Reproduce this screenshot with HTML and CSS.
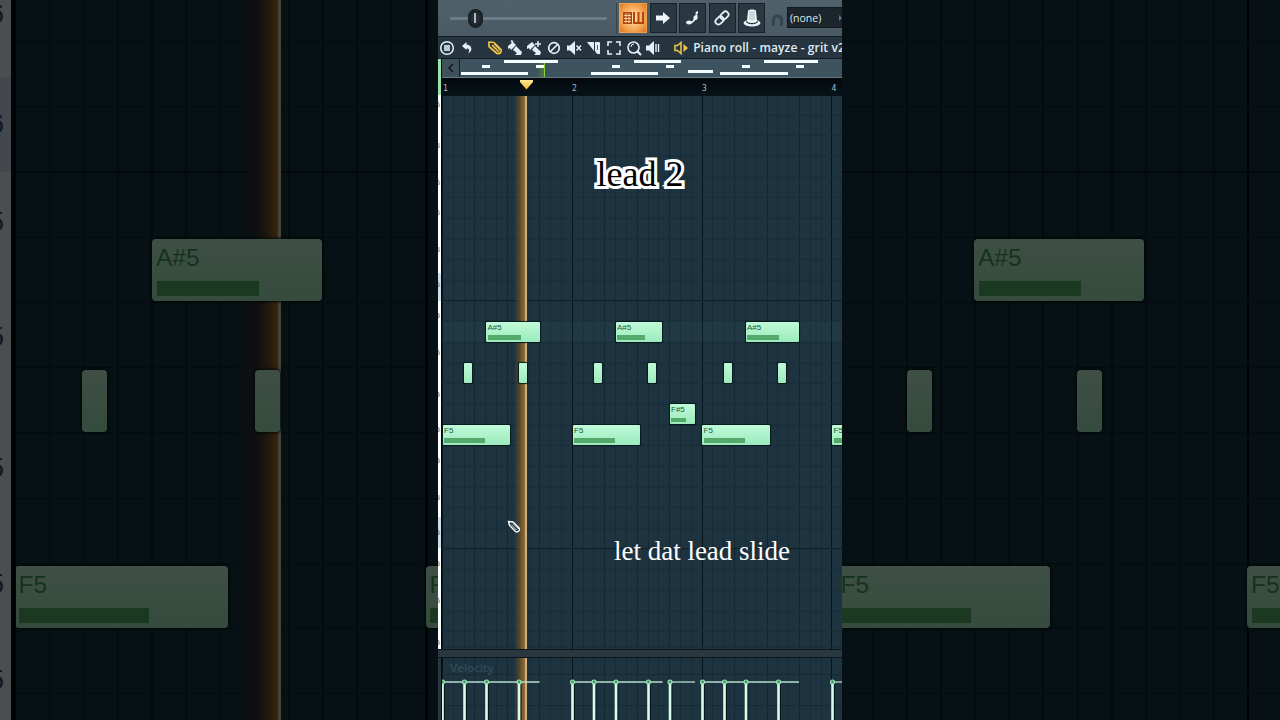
FILE: index.html
```
<!DOCTYPE html>
<html lang="en">
  <head>
    <meta charset="UTF-8" />
    <meta name="viewport" content="width=device-width, initial-scale=1.0" />
    <title>Piano roll - lead 2</title>
    <link rel="stylesheet" href="styles.css">
  </head>

  <body>
    <div class="stage">
      <div class="side side-left">
        <div class="side-keys" id="sideKeys"></div>
        <div class="side-grid" id="leftGrid">
          <div class="side-playhead"></div>
        </div>
      </div>

      <main class="player">
        <!-- Top bar -->
        <div class="topbar">
          <div class="slider"><div class="knob"></div></div>
          <div class="buttons">
            <div class="btn active">
              <svg width="22" height="14" viewBox="0 0 22 14"><rect x="1" y="1" width="9" height="12" fill="#b4440e"/><path d="M2 4.500h7M2 7.500h7M2 10.500h7M4 2v10M7 2v10" stroke="#ffe3b0" stroke-width=".8"/><path d="M12 1v11h9V1M16.500 1v11" fill="none" stroke="#b4440e" stroke-width="2"/></svg>
            </div>
            <div class="btn">
              <svg width="18" height="16" viewBox="0 0 18 16"><path d="M2 5.500h7V2l7 6-7 6v-3.500H2z" fill="#eef6fa"/></svg>
            </div>
            <div class="btn">
              <svg width="18" height="18" viewBox="0 0 18 18"><path d="M3 14c4 1 6-1 8-4" fill="none" stroke="#e4eef3" stroke-width="1.500"/><ellipse cx="5" cy="13.500" rx="2.800" ry="1.900" fill="#eef6fa"/><path d="M10 11V7.500l3-1.500v4zM12 3.500l1.500-1v2l-1.500 1z" fill="#eef6fa" stroke="#eef6fa"/></svg>
            </div>
            <div class="btn">
              <svg width="18" height="18" viewBox="0 0 18 18"><g fill="none" stroke="#e8f1f5" stroke-width="1.800" transform="rotate(-45 9 9)"><rect x="1" y="6" width="9" height="6" rx="3"/><rect x="8" y="6" width="9" height="6" rx="3"/></g></svg>
            </div>
            <div class="btn">
              <svg width="20" height="20" viewBox="0 0 20 20"><ellipse cx="10" cy="15" rx="8.500" ry="3.500" fill="#e8f1f5"/><path d="M4.500 13c1 3.500 10 3.500 11 0" fill="none" stroke="#26333b" stroke-width="1.200"/><path d="M6 3c0-2 8-2 8 0l1 10c-1 2-9 2-10 0z" fill="#eef6fa"/><path d="M8 3v9M10 3v10M12 3v9" stroke="#93a3ad" stroke-width=".7"/></svg>
            </div>
          </div>
          <svg class="magnet" width="13" height="13" viewBox="0 0 13 13"><path d="M2.500 12V6a4 4 0 0 1 8 0v6" fill="none" stroke="#35444d" stroke-width="3"/></svg>
          <div class="snap">(none)<span class="snap-arrow"></span></div>
        </div>

        <!-- Tool icons -->
        <div class="toolbar">
          <svg class="icon" viewBox="0 0 16 16"><circle cx="8" cy="8" r="6.300" fill="none" stroke="#e3f1f7" stroke-width="1.500"/><rect x="5" y="5" width="6" height="6" fill="#b5cad4"/></svg>
          <svg class="icon" viewBox="0 0 16 16"><path d="M3 6l4.500-4v2.500c6 .5 6.500 7 1.500 9 2-3 1.500-5-1.500-5V10z" fill="#e3f1f7"/></svg>
          <svg class="icon pencil" viewBox="0 0 16 16"><g fill="none" stroke="#f3c649" stroke-width="1.700" stroke-linejoin="round"><path d="M2 2l5 .5 7 7c1 2-1 5-4 4l-8-7z"/><path d="M5 5l7 7M7.500 4l6 6"/></g></svg>
          <svg class="icon brush" viewBox="0 0 16 16"><path d="M1 6l5-4 3 3-5 5-1-2-2 1z" fill="#e3f1f7"/><path d="M6 2L4 1" stroke="#e3f1f7" stroke-width="2"/><path d="M6 10l3-4 6 6-1 3H8l2-2z" fill="#e3f1f7"/></svg>
          <svg class="icon brush" viewBox="0 0 16 16"><path d="M1 6l5-4 3 3-5 5-1-2-2 1z" fill="#e3f1f7"/><path d="M12 1v6M9 4h6" stroke="#e3f1f7" stroke-width="1.500"/><path d="M6 10l3-4 6 6-1 3H8l2-2z" fill="#e3f1f7"/></svg>
          <svg class="icon" viewBox="0 0 16 16"><g fill="none" stroke="#e3f1f7" stroke-width="1.700"><circle cx="8" cy="8" r="5.300"/><path d="M4 12l8-8"/></g></svg>
          <svg class="icon" viewBox="0 0 16 16"><path d="M1 5.500h3l5-4.500v14L4 10.500H1z" fill="#e3f1f7"/><path d="M10.500 5.500l4.500 5M15 5.500l-4.500 5" stroke="#e3f1f7" stroke-width="1.500"/></svg>
          <svg class="icon" viewBox="0 0 16 16"><path d="M1 2h7v9z" fill="#e3f1f7"/><path d="M9 2h4c1 0 1 1 1 2v10h-3L9 11z" fill="#e3f1f7"/><path d="M11.500 5v5" stroke="#55656e"/></svg>
          <svg class="icon" viewBox="0 0 16 16"><path d="M2 6V2h4M10 2h4v4M14 10v4h-4M6 14H2v-4" fill="none" stroke="#e3f1f7" stroke-width="1.600"/></svg>
          <svg class="icon" viewBox="0 0 16 16"><circle cx="7.500" cy="7.500" r="5.500" fill="none" stroke="#e3f1f7" stroke-width="1.600"/><path d="M5 7a3 3 0 0 1 3-3" fill="none" stroke="#e3f1f7"/><path d="M11 11l4 4" stroke="#e3f1f7" stroke-width="2.300"/></svg>
          <svg class="icon" viewBox="0 0 16 16"><path d="M1 5.500h3l5-4.500v14L4 10.500H1z" fill="#e3f1f7"/><path d="M11 4v8M13.500 4v8" stroke="#e3f1f7" stroke-width="1.400"/></svg>
          <svg class="icon channel" viewBox="0 0 16 16"><path d="M2 5.500h2.500L8 2.500v11L4.500 10.500H2z" fill="none" stroke="#f3c649" stroke-width="1.500"/><path d="M10.500 4l4.500 4-4.500 4z" fill="#f3c649"/></svg>
          <span class="title">Piano roll - mayze - grit v2</span>
        </div>

        <div class="roll">
          <div class="keys">
            <div class="keys-head"></div>
            <div class="keys-body" id="keys"></div>
          </div>
          <div class="roll-main">
            <!-- Overview strip -->
            <div class="overview">
              <div class="scroll-btn">
                <svg width="8" height="10" viewBox="0 0 8 10"><path d="M6 1L2 5l4 4" fill="none" stroke="#0d1a21" stroke-width="1.500"/></svg>
              </div>
              <div class="minimap" id="minimap">
                <div class="mini-playhead"></div>
              </div>
            </div>
            <div class="ruler" id="ruler">
              <div class="marker"></div>
            </div>
            <div class="grid" id="grid">
              <div class="playhead"></div>
            </div>
          </div>
        </div>

        <div class="divider"></div>

        <div class="velocity">
          <div class="velocity-edge"></div>
          <div class="velocity-grid">
            <div class="playhead"></div>
            <span class="velocity-label">Velocity</span>
            <svg id="stems" class="stems" width="400" height="62"></svg>
          </div>
        </div>

        <svg class="cursor" width="14" height="14" viewBox="0 0 14 14"><path d="M1.500 1.500l4.500.5 6 6c1.500 2-1.500 5-3.500 3.500l-6-6z" fill="#17303b" stroke="#fff" stroke-width="1.400"/><path d="M4 4.500l5.500 5.500M6 3.500l5.500 5.500" stroke="#fff" stroke-width=".9"/></svg>
        <div class="caption caption-top">lead 2</div>
        <div class="caption caption-bottom">let dat lead slide</div>
      </main>

      <div class="side side-right">
        <div class="side-grid" id="rightGrid"></div>
      </div>
    </div>

    <script src="script.js"></script>
  </body>
</html>
```
FILE: styles.css
```
body {
  margin: 0;
  background: #000;
  overflow: hidden;
}

.stage {
  display: flex;
  width: 1280px;
  height: 720px;
  overflow: hidden;
}

/* Dimmed enlarged rolls on both sides */
.side {
  display: flex;
  width: 438px;
  background: #070f13;
  overflow: hidden;
}

.side-keys {
  position: relative;
  width: 11px;
  border-right: 5px solid #010304;
  background: linear-gradient(#4b4e50 77px, #42484d 77px, #42484d 172px, #4b4e50 172px);
  overflow: hidden;
}

.side-keys .key-label {
  right: 7px;
  font-size: 28px;
  line-height: 30px;
  margin-top: -15px;
  color: #12181c;
}

.side-grid {
  position: relative;
  flex: 1;
  overflow: hidden;
  background-color: #071014;
}

.side-left .side-grid {
  background-image:
    linear-gradient(90deg, transparent 409px, #010406 409px, #010406 412px, transparent 412px),
    linear-gradient(transparent 171px, #02090c 171px, #02090c 173px, transparent 173px),
    repeating-linear-gradient(90deg, transparent 0 32.7px, #040b0f 32.7px 34.2px),
    repeating-linear-gradient(transparent 0 64.2px, #040b0f 64.2px 65.2px);
  background-position: 0 0, 0 0, 0 0, 0 -23px;
}

.side-right .side-grid {
  background-image:
    linear-gradient(90deg, transparent 405px, #010406 405px, #010406 407px, transparent 407px),
    linear-gradient(transparent 171px, #02090c 171px, #02090c 173px, transparent 173px),
    repeating-linear-gradient(90deg, transparent 0 30px, #040b0f 30px 32px, transparent 32px 34.1px),
    repeating-linear-gradient(transparent 0 64.2px, #040b0f 64.2px 65.2px);
  background-position: 0 0, 0 0, 0 0, 0 -23px;
}

.side-playhead {
  position: absolute;
  left: 222px;
  top: 0;
  width: 40px;
  height: 720px;
  border-right: 3px solid #4a4139;
  background: linear-gradient(90deg, transparent, #100f10 50%, #21180e 75%, #38260c);
}

/* Notes */
.note {
  position: absolute;
  box-sizing: border-box;
  height: 20px;
  border-radius: 1px;
  background: linear-gradient(#bffad8, #9deabd);
  box-shadow: 0 0 1px 0.5px #06191d;
  overflow: hidden;
}

.note-label {
  display: block;
  padding-left: 1.500px;
  font: 8px/12px "Liberation Sans", sans-serif;
  color: #1d5c36;
}

.note-level {
  position: absolute;
  left: 1.500px;
  bottom: 2px;
  height: 4.500px;
  background: #54aa6b;
}

.side .note {
  height: 62px;
  border-radius: 4px;
  background: linear-gradient(#3f4f45, #344b3d);
  box-shadow: 0 0 3px 1px #020908;
}

.side .note-label {
  padding-left: 4px;
  font-size: 24.500px;
  line-height: 38px;
  color: #14331d;
}

.side .note-level {
  left: 4.500px;
  bottom: 5px;
  height: 15px;
  background: #1b3821;
}

/* Center column */
.player {
  position: relative;
  display: flex;
  flex-direction: column;
  width: 404px;
  height: 720px;
  background: #1d3440;
  overflow: hidden;
}

.topbar {
  display: flex;
  align-items: center;
  box-sizing: border-box;
  height: 36px;
  padding-left: 12px;
  background: linear-gradient(#50616c, #495a64);
}

.slider {
  flex: none;
  width: 157px;
  height: 3px;
  margin-right: 9px;
  border-radius: 1px;
  background: #6c7b85;
}

.knob {
  width: 15px;
  height: 19px;
  margin: -8px 0 0 18px;
  border-radius: 8px;
  background: linear-gradient(90deg, transparent 6.500px, #aeb8be 6.500px, #aeb8be 8.500px, transparent 8.500px) 0 4px / 15px 10px no-repeat, radial-gradient(#303b42, #0c1317);
}

.buttons {
  display: flex;
  gap: 2.500px;
  padding: 0 6px 1px 2px;
  border-left: 1px solid #35434c;
}

.btn {
  display: flex;
  align-items: center;
  justify-content: center;
  box-sizing: border-box;
  width: 27px;
  height: 30px;
  border: 1px solid #17222a;
  background: #2a3841;
}

.btn.active {
  width: 28px;
  border-color: #f0a050;
  background: radial-gradient(#ffe9b8, #f4a14b 65%, #dd7322);
}

.magnet {
  flex: none;
  margin: 4px 3px 0 0;
}

.snap {
  display: flex;
  align-items: center;
  justify-content: space-between;
  box-sizing: border-box;
  flex: 1;
  height: 21px;
  margin-bottom: 1px;
  padding-left: 2px;
  border: 1px solid #10191e;
  border-right: 0;
  background: #1b252b;
  color: #dde8ee;
  font: 10.500px "Open Sans", sans-serif;
}

.snap-arrow {
  border: 3px solid transparent;
  border-left-color: #65737b;
  border-right: 0;
}

.toolbar {
  display: flex;
  align-items: center;
  gap: 3.850px;
  box-sizing: border-box;
  height: 23px;
  padding-left: 1px;
  border-top: 1px solid #121d23;
  border-bottom: 1px solid #121d23;
  background: #26353f;
}

.icon {
  flex: none;
  width: 16px;
  height: 16px;
}

.icon.pencil,
.icon.channel {
  margin-left: 8px;
}

.title {
  color: #e0edf4;
  font: 600 12px "Open Sans", sans-serif;
  letter-spacing: 0.1px;
  white-space: nowrap;
}

/* Roll */
.roll {
  display: flex;
  height: 590px;
}

.keys {
  width: 3px;
  border-right: 1.500px solid #03090c;
}

.keys-head {
  height: 36px;
  background: #98e5ad;
}

.keys-body {
  position: relative;
  height: 554px;
  background: linear-gradient(#fbffff 178px, #cfdeea 178px, #cfdeea 206px, #fbffff 206px, #fbffff 422px, #cfdeea 422px, #cfdeea 453px, #fbffff 453px);
  overflow: hidden;
}

.key-label {
  position: absolute;
  right: 1px;
  font: 8px/10px "Liberation Sans", sans-serif;
  margin-top: -5px;
  color: #50616c;
}

.roll-main {
  flex: 1;
}

.overview {
  display: flex;
  height: 17.500px;
  border-bottom: 1.500px solid #66767f;
}

.scroll-btn {
  display: flex;
  align-items: center;
  justify-content: center;
  width: 17px;
  border-right: 1px solid #15222a;
  background: #40515b;
}

.minimap {
  position: relative;
  flex: 1;
  background: #3d5460;
  overflow: hidden;
}

.mini-note {
  position: absolute;
  height: 3px;
  background: #f3fdff;
}

.mini-playhead {
  position: absolute;
  left: 77px;
  top: 4px;
  width: 7px;
  height: 14px;
  border-right: 1.500px solid #85d52c;
  background: linear-gradient(90deg, transparent, #4d7c3c);
}

.ruler {
  position: relative;
  height: 18px;
  background: linear-gradient(#03090d, #071319);
  overflow: hidden;
}

.bar-number {
  position: absolute;
  top: 6px;
  color: #a9bbc5;
  font: 8px/10px "DejaVu Sans Mono", monospace;
}

.marker {
  position: absolute;
  left: 78px;
  top: 2px;
  width: 13px;
  height: 10px;
  background: linear-gradient(#ffe794, #efb62b);
  clip-path: polygon(0 0, 100% 0, 100% 25%, 50% 100%, 0 25%);
}

.grid,
.velocity-grid {
  position: relative;
  overflow: hidden;
  background-color: #1d3440;
  background-image:
    repeating-linear-gradient(90deg, #05141b 0 1px, transparent 1px 129.830px),
    repeating-linear-gradient(90deg, #122731 0 1px, transparent 1px 32.458px),
    repeating-linear-gradient(90deg, #172c37 0 1px, transparent 1px 10.819px);
}

.grid {
  height: 553px;
}

.grid::before {
  content: "";
  position: absolute;
  inset: 0;
  background:
    linear-gradient(transparent 204px, #0f232d 204px, #0f232d 205px, transparent 205px, transparent 225px, rgba(96, 133, 147, 0.06) 225px, rgba(96, 133, 147, 0.06) 246px, transparent 246px, transparent 452px, #0f232d 452px, #0f232d 453px, transparent 453px),
    repeating-linear-gradient(#162b36 0 1px, transparent 1px 20.670px) 0 -2.300px;
}

.playhead {
  position: absolute;
  left: 72px;
  top: 0;
  width: 11px;
  height: 100%;
  border-right: 2px solid #c9b087;
  background: linear-gradient(90deg, transparent, rgba(112, 84, 42, 0.5) 40%, #9a6c2a);
}

.divider {
  flex: none;
  height: 7px;
  border-top: 1px solid #0c171c;
  border-bottom: 1px solid #0c171c;
  background: #2b373f;
}

.velocity {
  display: flex;
  flex: 1;
}

.velocity-edge {
  width: 3px;
  border-right: 1.500px solid #03090c;
  background: #2b373f;
}

.velocity-grid {
  flex: 1;
}

.velocity-grid::before {
  content: "";
  position: absolute;
  inset: 0;
  background: linear-gradient(transparent 16px, #142a35 16px, #142a35 17px, transparent 17px, transparent 47px, #142a35 47px, #142a35 48px, transparent 48px);
}

.velocity-label {
  position: absolute;
  left: 8px;
  top: 2px;
  color: #344b57;
  font: 600 11.500px/16px "Open Sans", sans-serif;
}

.stems {
  position: absolute;
  left: 0;
  top: 0;
}

/* Things over the roll */
.cursor {
  position: absolute;
  left: 69px;
  top: 520px;
}

.caption {
  position: absolute;
  left: 0;
  width: 100%;
  font-family: "Liberation Serif", serif;
  text-align: center;
  white-space: nowrap;
}

.caption-top {
  top: 154px;
  color: #000;
  font-size: 36px;
  line-height: 40px;
  -webkit-text-stroke: 6px #fff;
  paint-order: stroke fill;
  stroke-linejoin: round;
}

.caption-bottom {
  top: 536px;
  left: 62px;
  color: #fff;
  font-size: 27px;
  line-height: 31px;
}
```
FILE: script.js
```
// Note rows: x, y, width, label, level width
const centerNotes = [
  [44, 226, 53.5, "A#5", 33],
  [173.5, 226, 46.5, "A#5", 28],
  [303.5, 226, 53.5, "A#5", 32],
  [22, 267, 8],
  [76.5, 267, 8],
  [151.5, 267, 8],
  [206, 267, 8],
  [282, 267, 8],
  [336, 267, 8],
  [227.5, 308.5, 25, "F#5", 15],
  [0.5, 329, 67.5, "F5", 41],
  [130.5, 329, 67, "F5", 41],
  [260, 329, 67.5, "F5", 41],
  [390, 329, 67.5, "F5", 41],
];

const leftNotes = [
  [136, 239, 169.5, "A#5", 102],
  [66, 370, 25],
  [239, 370, 25],
  [-1.5, 566, 213.5, "F5", 130],
  [409.5, 566, 213, "F5", 130],
];

const rightNotes = [
  [132, 239, 169.5, "A#5", 102],
  [64.5, 370, 25],
  [234.5, 370, 25],
  [-5.5, 566, 213.5, "F5", 130],
  [405, 566, 213, "F5", 130],
];

function drawNotes(id, notes) {
  const grid = document.getElementById(id);
  notes.forEach(([x, y, width, label, level]) => {
    const note = document.createElement("div");
    note.className = "note";
    note.style.left = `${x}px`;
    note.style.top = `${y}px`;
    note.style.width = `${width}px`;
    if (label) {
      note.innerHTML = `<span class="note-label">${label}</span><div class="note-level" style="width: ${level}px"></div>`;
    }
    grid.appendChild(note);
  });
}

function drawKeyLabels(id, rows, text) {
  const keys = document.getElementById(id);
  rows.forEach((y, i) => {
    const label = document.createElement("span");
    label.className = "key-label";
    label.textContent = text[i] || "5";
    label.style.top = `${y}px`;
    keys.appendChild(label);
  });
}

// Overview notes: x, y, width
const miniNotes = [
  [43.5, 1, 54.5], [174, 1, 47], [303.5, 1, 54],
  [22, 6, 8], [76, 6, 8], [152, 6, 8], [206, 6, 8], [282, 6, 8], [336, 6, 8],
  [228, 11, 25],
  [1, 13, 66.5], [130.5, 13, 67.5], [260, 13, 68],
];

function drawMinimap() {
  const map = document.getElementById("minimap");
  miniNotes.forEach(([x, y, width]) => {
    const note = document.createElement("div");
    note.className = "mini-note";
    note.style.left = `${x}px`;
    note.style.top = `${y}px`;
    note.style.width = `${width}px`;
    map.appendChild(note);
  });
}

function drawRuler() {
  const ruler = document.getElementById("ruler");
  [1, 130, 260, 389.5].forEach((x, i) => {
    const number = document.createElement("span");
    number.className = "bar-number";
    number.textContent = i + 1;
    number.style.left = `${x}px`;
    ruler.appendChild(number);
  });
}

// Velocity stems with a length line for each note
function drawStems() {
  const xs = [0.5, 22.5, 44.5, 77, 130.5, 152, 174, 206.5, 228, 260.5, 282.5, 304, 336.5, 390.5];
  const lines = [[0, 97.5], [130, 220.5], [227, 253], [260, 357], [390, 400]];
  let out = "";
  xs.forEach((x) => {
    out += `<path d="M${x + 2} 26V62" stroke="#06171d" stroke-width="1"/>`;
    out += `<path d="M${x} 24V62" stroke="#d9fbe9" stroke-width="2.6"/>`;
  });
  lines.forEach(([from, to]) => {
    out += `<path d="M${from} 24H${to}" stroke="#b9dccd" stroke-width="1.3"/>`;
  });
  xs.forEach((x) => {
    out += `<circle cx="${x}" cy="24" r="2" fill="#3c9b60" stroke="#a4e7bd" stroke-width="1.1"/>`;
  });
  document.getElementById("stems").innerHTML = out;
}

drawNotes("grid", centerNotes);
drawNotes("leftGrid", leftNotes);
drawNotes("rightGrid", rightNotes);
drawKeyLabels("keys", [10, 51, 88, 118, 155, 190, 221, 258, 300, 335, 366, 403, 438, 469, 506, 548], ["6", "6", "6", "6", "6", "6"]);
drawKeyLabels("sideKeys", [14, 124, 222, 337, 468, 584, 680], ["6", "6"]);
drawMinimap();
drawRuler();
drawStems();
```
